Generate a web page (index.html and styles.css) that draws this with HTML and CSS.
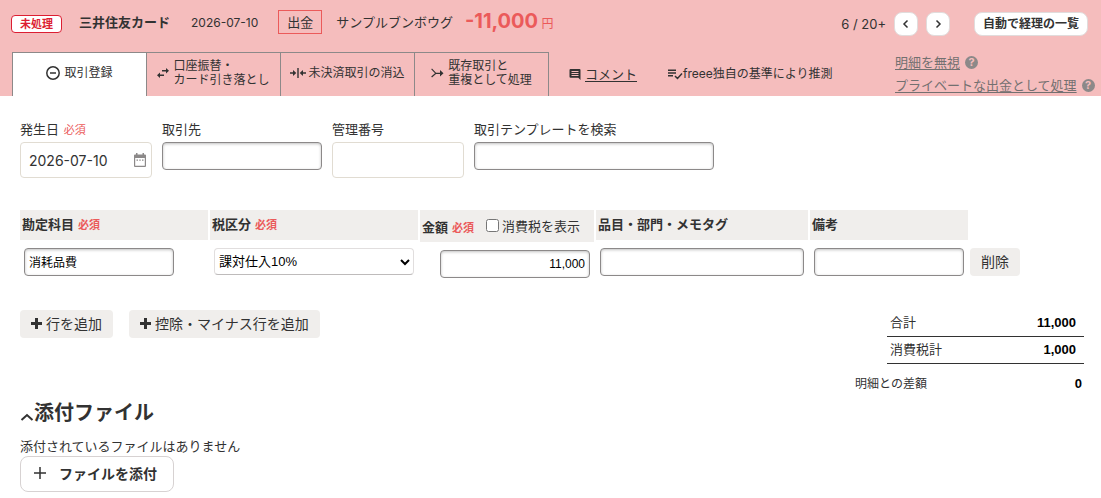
FILE: index.html
```html
<!DOCTYPE html>
<html lang="ja">
  <head>
    <meta charset="UTF-8" />
    <meta name="viewport" content="width=device-width, initial-scale=1.0" />
    <title>自動で経理</title>
    <link rel="stylesheet" href="styles.css">
  </head>
  <body>
    <header class="deal-header">
      <div class="summary">
        <span class="status">未処理</span>
        <strong class="bank">三井住友カード</strong>
        <span class="date">2026-07-10</span>
        <span class="direction">出金</span>
        <span class="partner">サンプルブンボウグ</span>
        <span class="amount"><strong>-11,000</strong> 円</span>
        <div class="pager">
          <span class="count">6 / 20+</span>
          <button class="page-button" aria-label="前へ">
            <svg width="12" height="12" viewBox="0 0 12 12"><path d="M7.500 2.500L4 6l3.500 3.500" /></svg>
          </button>
          <button class="page-button" aria-label="次へ">
            <svg width="12" height="12" viewBox="0 0 12 12"><path d="M4.500 2.500L8 6 4.500 9.500" /></svg>
          </button>
          <button class="list-button">自動で経理の一覧</button>
        </div>
      </div>

      <div class="nav">
        <div class="tabs">
          <button class="tab active">
            <svg class="line" width="14" height="14" viewBox="0 0 14 14"><circle cx="7" cy="7" r="6.200" /><path d="M4 7h6" /></svg>
            <span>取引登録</span>
          </button>
          <button class="tab">
            <svg width="12" height="12" viewBox="0 0 12 12"><path d="M5 3h4v-2l3 2.700-3 2.700v-2H5zM7 7.600H3v-2L0 8.300 3 11V9h4z" /></svg>
            <span>口座振替・<br>カード引き落とし</span>
          </button>
          <button class="tab">
            <svg width="16" height="12" viewBox="0 0 16 12"><path d="M7.300 1h1.400v10H7.300zM0 5.300h3V3l3.300 3L3 9V6.700H0zM16 5.300h-3V3L9.700 6 13 9V6.700h3z" /></svg>
            <span>未決済取引の消込</span>
          </button>
          <button class="tab">
            <svg width="13" height="12" viewBox="0 0 13 12"><path d="M1 1.500l4 4.200h4V3l3.500 3.300L9 9.500V7H5l-4 3.500-.8-1L4 6.300.2 2.300z" /></svg>
            <span>既存取引と<br>重複として処理</span>
          </button>
        </div>
        <a class="comment" href="#">
          <svg width="12" height="12" viewBox="0 0 12 12"><path fill-rule="evenodd" d="M1.500 1h9q1 0 1 1v10L9.300 9.800H1.500q-1 0-1-1V2q0-1 1-1zM2.500 3v1h7V3zM2.500 5v1h7V5zM2.500 7v1h7V7z" /></svg>
          <span>コメント</span>
        </a>
        <div class="guess">
          <svg class="line" width="16" height="12" viewBox="0 0 16 12"><path d="M1 2.300h8M1 5h8M1 7.800h5M8 8l2.500 2.500L15 5.500" /></svg>
          <span>freee独自の基準により推測</span>
        </div>
        <div class="side-links">
          <div><a href="#">明細を無視</a><span class="help">?</span></div>
          <div><a href="#">プライベートな出金として処理</a><span class="help">?</span></div>
        </div>
      </div>
    </header>

    <main class="content">
      <div class="basic">
        <div class="field field-small">
          <label for="issue-date">発生日 <span class="required">必須</span></label>
          <div class="date-box">
            <input class="large" type="text" id="issue-date" value="2026-07-10">
            <svg class="calendar" width="14" height="14" viewBox="0 0 14 14"><path fill-rule="evenodd" d="M3 0h1.500v1.500h5V0H11v1.500h1q1 0 1 1V13q0 1-1 1H2q-1 0-1-1V2.500q0-1 1-1h1zM2.200 5v7.800h9.600V5zM3.500 6.500H5v1.300H3.500zM6.300 6.500h1.400v1.300H6.300zM9 6.500h1.500v1.300H9z" /></svg>
          </div>
        </div>
        <div class="field field-medium">
          <label for="partner">取引先</label>
          <input class="inset" type="text" id="partner">
        </div>
        <div class="field field-small">
          <label for="ref-number">管理番号</label>
          <input class="large" type="text" id="ref-number">
        </div>
        <div class="field field-wide">
          <label for="template">取引テンプレートを検索</label>
          <input class="inset" type="text" id="template">
        </div>
      </div>

      <table class="details">
        <thead>
          <tr>
            <th class="col-account"><div class="head">勘定科目 <span class="required">必須</span></div></th>
            <th class="col-tax"><div class="head">税区分 <span class="required">必須</span></div></th>
            <th class="col-amount">
              <div class="head head-amount">
                <span>金額 <span class="required">必須</span></span>
                <label><input type="checkbox">消費税を表示</label>
              </div>
            </th>
            <th class="col-tags"><div class="head">品目・部門・メモタグ</div></th>
            <th class="col-note"><div class="head">備考</div></th>
            <td></td>
          </tr>
        </thead>
        <tbody>
          <tr>
            <td><input class="inset account" type="text" value="消耗品費" aria-label="勘定科目"></td>
            <td>
              <div class="select-box">
                <select aria-label="税区分"><option>課対仕入10%</option></select>
                <svg class="arrow" width="12" height="8" viewBox="0 0 12 8"><path d="M2 2l4 4 4-4" /></svg>
              </div>
            </td>
            <td class="amount-cell"><input class="inset number" type="text" value="11,000" aria-label="金額"></td>
            <td><input class="inset tags" type="text" aria-label="品目・部門・メモタグ"></td>
            <td><input class="inset note" type="text" aria-label="備考"></td>
            <td class="delete-cell"><button class="gray-button">削除</button></td>
          </tr>
        </tbody>
      </table>

      <div class="footer-row">
        <div class="add-buttons">
          <button class="gray-button"><svg width="11" height="11" viewBox="0 0 11 11"><path d="M4 0h3v4h4v3H7v4H4V7H0V4h4z" /></svg>行を追加</button>
          <button class="gray-button"><svg width="11" height="11" viewBox="0 0 11 11"><path d="M4 0h3v4h4v3H7v4H4V7H0V4h4z" /></svg>控除・マイナス行を追加</button>
        </div>
        <div class="totals">
          <table class="total-table">
            <tr><th>合計</th><td>11,000</td></tr>
            <tr><th>消費税計</th><td>1,000</td></tr>
          </table>
          <div class="difference"><span>明細との差額</span><strong>0</strong></div>
        </div>
      </div>

      <section class="files">
        <h2>
          <svg width="14" height="10" viewBox="0 0 14 10"><path d="M1.500 8L7 3l5.500 5" /></svg>
          添付ファイル
        </h2>
        <p>添付されているファイルはありません</p>
        <button class="attach">
          <svg width="14" height="14" viewBox="0 0 14 14"><path d="M7 1v12M1 7h12" /></svg>
          ファイルを添付
        </button>
      </section>
    </main>
  </body>
</html>
```
FILE: styles.css
```css
* {
  box-sizing: border-box;
}

body {
  margin: 0;
  font-family: Inter, "Noto Sans CJK JP", sans-serif;
  font-size: 13px;
  line-height: 20px;
  color: #323232;
  background-color: #fff;
}

button, input, select {
  font-family: inherit;
  color: inherit;
  margin: 0;
}

button {
  cursor: pointer;
}

a {
  color: inherit;
}

svg {
  flex-shrink: 0;
  fill: currentColor;
}

/* header */
.deal-header {
  background-color: #f5bdbd;
}

.summary {
  display: flex;
  align-items: center;
  height: 52px;
  padding: 0 13px 8px 11px;
  white-space: nowrap;
}

.status {
  height: 18px;
  margin-top: 4px;
  padding: 0 8px;
  border: 1px solid #dc1e32;
  border-radius: 4px;
  background-color: #fff;
  color: #dc1e32;
  font-size: 11px;
  font-weight: bold;
  line-height: 16px;
}

.bank {
  margin-left: 17px;
}

.date {
  margin-left: 21px;
  padding-top: 2px;
  font-size: 12px;
}

.direction {
  margin-left: 20px;
  padding: 1px 8px;
  border: 1px solid #eb5a5a;
}

.partner {
  margin-left: 14px;
}

.amount {
  margin-left: 12px;
  color: #eb5a5a;
  font-size: 12px;
}

.amount strong {
  font-size: 20px;
}

.pager {
  display: flex;
  align-items: center;
  gap: 8px;
  margin-left: auto;
  padding-top: 3px;
}

.page-button, .list-button {
  height: 24px;
  padding: 0;
  border: 1px solid #e1dcdc;
  border-radius: 8px;
  background-color: #fff;
}

.page-button {
  display: flex;
  align-items: center;
  justify-content: center;
  width: 24px;
}

.page-button path {
  fill: none;
  stroke: #323232;
  stroke-width: 1.500;
}

.list-button {
  margin-left: 16px;
  padding: 0 8px 2px;
  font-size: 12px;
  font-weight: bold;
}

.nav {
  display: flex;
  height: 44px;
  padding-left: 12px;
  white-space: nowrap;
}

.tabs {
  display: flex;
  border-left: 1px solid #8c8989;
}

.tab {
  display: flex;
  align-items: center;
  justify-content: center;
  gap: 4px;
  width: 134px;
  padding: 0 0 3px;
  border: 0 solid #8c8989;
  border-width: 1px 1px 0 0;
  background: none;
  font-size: 12px;
  line-height: 14px;
  text-align: left;
}

.tab:nth-child(3) {
  gap: 2px;
}

.tab.active {
  background-color: #fff;
}

.line {
  fill: none;
  stroke: currentColor;
  stroke-width: 1.500;
}

.comment, .guess {
  display: flex;
  align-items: center;
}

.comment {
  gap: 4px;
  margin-left: 20px;
  text-decoration: none;
}

.comment span {
  text-decoration: underline;
  text-underline-offset: 2px;
}

.guess {
  margin-left: 30px;
  font-size: 12px;
}

.side-links {
  width: 206px;
  margin: -1px 0 0 auto;
  color: #737070;
  line-height: 23px;
}

.side-links a {
  text-underline-offset: 2px;
}

.side-links div {
  display: flex;
  align-items: center;
  gap: 5px;
}

.help {
  width: 13px;
  height: 13px;
  border-radius: 50%;
  background-color: #8c8989;
  color: #f5bdbd;
  font-size: 11px;
  font-weight: bold;
  line-height: 13px;
  text-align: center;
}

/* form */
.content {
  padding: 24px 17px 6px 20px;
}

.basic {
  display: flex;
  gap: 10px;
  height: 58px;
}

.field {
  display: flex;
  flex-direction: column;
}

.field label {
  height: 22px;
  line-height: 18px;
}

.field-small {
  width: 132px;
}

.field-medium {
  width: 160px;
}

.field-wide {
  width: 240px;
}

.required {
  margin-left: 1px;
  color: #eb5a5a;
  font-size: 11px;
}

.large {
  width: 100%;
  height: 36px;
  padding: 0 8px;
  border: 1px solid #e1dcd2;
  border-radius: 4px;
  background-color: #fff;
  font-size: 14px;
}

.inset {
  height: 28px;
  padding: 0 4px;
  border: 1px solid #8c8989;
  border-radius: 4px;
  background-color: #fff;
  box-shadow: inset 0 1px 3px rgba(0, 0, 0, 0.25);
  color: #000;
  font-family: "Liberation Sans", "Noto Sans CJK JP", sans-serif;
  font-size: 12px;
}

.date-box, .select-box {
  position: relative;
}

.calendar {
  position: absolute;
  top: 11px;
  right: 5px;
  color: #8c8989;
}

.details {
  margin: 32px 0 0;
  border-spacing: 0;
}

.details th, .details td {
  padding: 0;
  vertical-align: top;
  text-align: left;
}

.details th {
  padding-right: 2px;
}

.details tbody td {
  padding: 6px 4px 0;
}

.col-account {
  width: 190px;
}

.col-tax {
  width: 210px;
}

.col-amount {
  width: 176px;
}

.col-tags {
  width: 214px;
}

.col-note {
  width: 160px;
}

.head {
  height: 30px;
  padding-left: 2px;
  background-color: #f0eeec;
  line-height: 28px;
  white-space: nowrap;
}

.head-amount {
  display: flex;
  gap: 12px;
  height: 32px;
  line-height: 34px;
}

.head label {
  display: flex;
  align-items: center;
  gap: 3px;
  font-weight: normal;
}

.head input {
  width: 13px;
  height: 13px;
  margin-bottom: 2px;
}

.details .amount-cell {
  padding: 8px 6px 0;
  text-align: right;
}

.details .delete-cell {
  padding: 6px 0 0;
}

.account, .number, .note {
  width: 150px;
}

.account {
  padding-bottom: 2px;
}

.number {
  text-align: right;
}

.tags {
  width: 204px;
}

select {
  width: 200px;
  height: 27px;
  padding: 0 4px;
  border: 1px solid #e1dede;
  border-bottom-color: #bebbbb;
  border-radius: 4px;
  appearance: none;
  background-color: #fff;
  color: #000;
  font-family: "Liberation Sans", "Noto Sans CJK JP", sans-serif;
  font-size: 13px;
}

.arrow {
  position: absolute;
  top: 10px;
  left: 185px;
}

.arrow path {
  fill: none;
  stroke: #000;
  stroke-width: 2;
}

.gray-button {
  height: 28px;
  padding: 0 11px 2px;
  border: none;
  border-radius: 4px;
  background-color: #f0eeec;
  font-size: 14px;
}

.gray-button svg {
  margin-right: 4px;
}

.footer-row {
  display: flex;
  justify-content: space-between;
  margin-top: 32px;
}

.add-buttons {
  display: flex;
  gap: 16px;
}

.totals {
  width: 229px;
}

.total-table {
  width: 197px;
  margin-left: auto;
  border-spacing: 0;
}

.total-table th, .total-table td {
  height: 27px;
  padding: 0 8px 2px 3px;
  border-bottom: 1px solid #323232;
  font-weight: normal;
  text-align: left;
}

.total-table td, .difference strong {
  color: #000;
  font-family: "Liberation Sans", sans-serif;
  font-weight: bold;
}

.total-table td {
  padding-bottom: 0;
  text-align: right;
}

.difference {
  display: flex;
  justify-content: space-between;
  margin-top: 10px;
  padding-right: 2px;
  font-size: 12px;
}

.difference strong {
  font-size: 13px;
}

.files h2 {
  display: flex;
  align-items: center;
  margin: 8px 0 12px;
  font-size: 20px;
  line-height: 22px;
}

.files h2 svg {
  margin-top: 8px;
}

.files h2 path, .attach path {
  fill: none;
  stroke: #323232;
  stroke-width: 2;
}

.files p {
  margin: 0;
}

.attach {
  display: flex;
  align-items: center;
  gap: 12px;
  height: 36px;
  padding: 0 16px 2px 12px;
  border: 1px solid #d7d2d2;
  border-radius: 8px;
  background-color: #fff;
  font-size: 14px;
  font-weight: bold;
}

.attach path {
  stroke-width: 1.500;
}
```
